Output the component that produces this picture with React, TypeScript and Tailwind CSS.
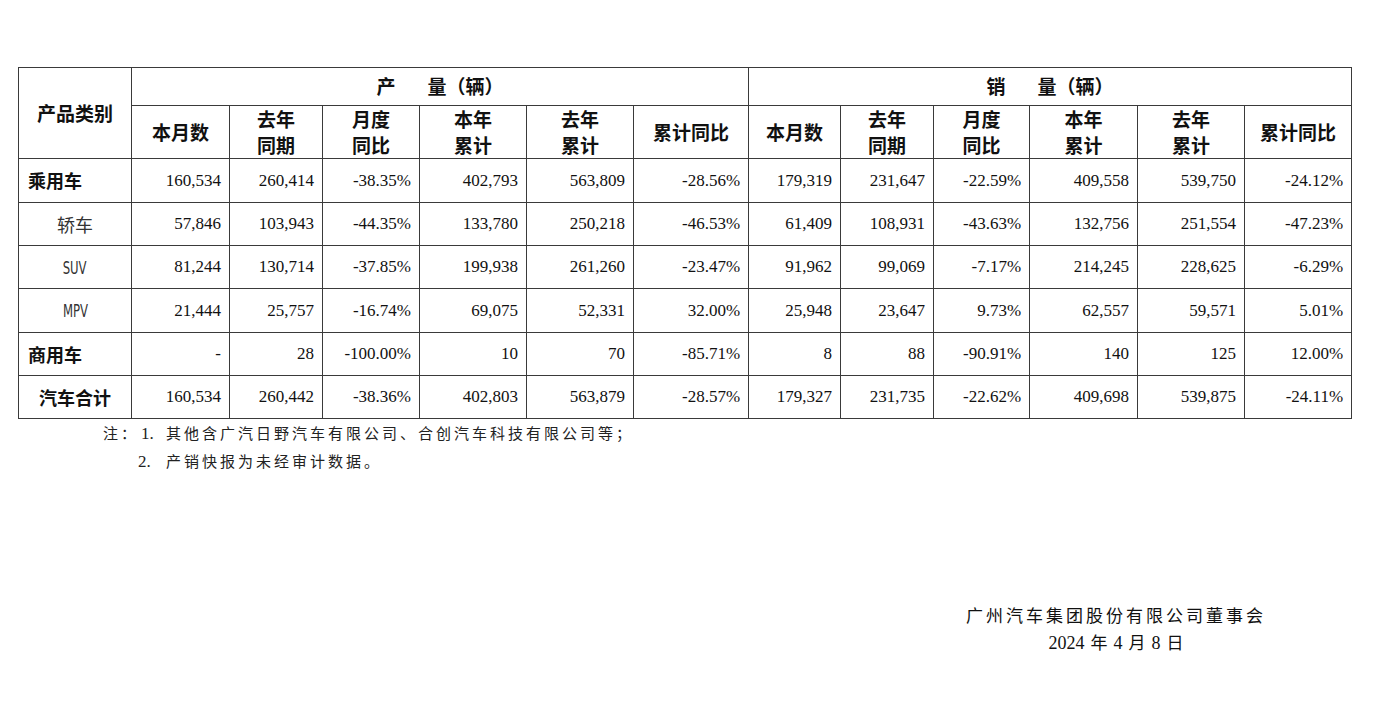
import React from "react";

const cjk = '"Noto Sans CJK SC", sans-serif';
const serif = '"Liberation Serif", "Noto Sans CJK SC", serif';

const widths = [113, 98, 93, 97, 107, 107, 115, 92, 93, 96, 108, 107, 107];

type Row = {
  name: string;
  kind: "main" | "sub" | "total";
  values: string[];
  height: string;
};

const rows: Row[] = [
  {
    name: "乘用车",
    kind: "main",
    height: "h-[44px]",
    values: ["160,534", "260,414", "-38.35%", "402,793", "563,809", "-28.56%", "179,319", "231,647", "-22.59%", "409,558", "539,750", "-24.12%"],
  },
  {
    name: "轿车",
    kind: "sub",
    height: "h-[43px]",
    values: ["57,846", "103,943", "-44.35%", "133,780", "250,218", "-46.53%", "61,409", "108,931", "-43.63%", "132,756", "251,554", "-47.23%"],
  },
  {
    name: "SUV",
    kind: "sub",
    height: "h-[43px]",
    values: ["81,244", "130,714", "-37.85%", "199,938", "261,260", "-23.47%", "91,962", "99,069", "-7.17%", "214,245", "228,625", "-6.29%"],
  },
  {
    name: "MPV",
    kind: "sub",
    height: "h-[44px]",
    values: ["21,444", "25,757", "-16.74%", "69,075", "52,331", "32.00%", "25,948", "23,647", "9.73%", "62,557", "59,571", "5.01%"],
  },
  {
    name: "商用车",
    kind: "main",
    height: "h-[43px]",
    values: ["-", "28", "-100.00%", "10", "70", "-85.71%", "8", "88", "-90.91%", "140", "125", "12.00%"],
  },
  {
    name: "汽车合计",
    kind: "total",
    height: "h-[43px]",
    values: ["160,534", "260,442", "-38.36%", "402,803", "563,879", "-28.57%", "179,327", "231,735", "-22.62%", "409,698", "539,875", "-24.11%"],
  },
];

const subHeads = [
  ["本月数"],
  ["去年", "同期"],
  ["月度", "同比"],
  ["本年", "累计"],
  ["去年", "累计"],
  ["累计同比"],
];

function HeadCell({ lines }: { lines: string[] }) {
  return (
    <th className="border border-[#3a3a3a] text-center align-middle font-bold text-[19px] leading-[26px] text-[#111]">
      {lines.map((l) => (
        <div key={l}>{l}</div>
      ))}
    </th>
  );
}

function NameCell({ row }: { row: Row }) {
  if (row.name === "SUV" || row.name === "MPV") {
    return (
      <td
        className="border border-[#3a3a3a] text-center text-[18px] text-[#333]"
        style={{ fontFamily: '"DejaVu Sans Condensed", "Liberation Sans Narrow", "Liberation Sans", sans-serif' }}
      >
        <span className="inline-block scale-x-[0.72]">{row.name}</span>
      </td>
    );
  }
  if (row.kind === "sub") {
    return <td className="border border-[#3a3a3a] text-center text-[18px] text-[#333]">{row.name}</td>;
  }
  if (row.kind === "total") {
    return <td className="border border-[#3a3a3a] text-center text-[18px] font-bold text-[#111]">{row.name}</td>;
  }
  return <td className="border border-[#3a3a3a] pl-[9px] text-left text-[18px] font-bold text-[#111]">{row.name}</td>;
}

export default function App() {
  return (
    <div className="min-h-[706px] w-[1375px] bg-white text-[#111]" style={{ fontFamily: cjk }}>
      <div className="pl-[18px] pt-[67px]">
        <table className="w-[1333px] table-fixed border-collapse border border-[#333]">
          <colgroup>
            {widths.map((w, i) => (
              <col key={i} style={{ width: w }} />
            ))}
          </colgroup>
          <thead>
            <tr className="h-[38px]">
              <th rowSpan={2} className="border border-[#3a3a3a] text-center align-middle text-[19px] font-bold">
                产品类别
              </th>
              <th colSpan={6} className="border border-[#3a3a3a] text-center text-[19px] font-bold">
                产<span className="inline-block w-[32px]" />量（辆）
              </th>
              <th colSpan={6} className="border border-[#3a3a3a] text-center text-[19px] font-bold">
                销<span className="inline-block w-[32px]" />量（辆）
              </th>
            </tr>
            <tr className="h-[53px]">
              {[...subHeads, ...subHeads].map((h, i) => (
                <HeadCell key={i} lines={h} />
              ))}
            </tr>
          </thead>
          <tbody>
            {rows.map((r) => (
              <tr key={r.name} className={r.height}>
                <NameCell row={r} />
                {r.values.map((v, i) => (
                  <td
                    key={i}
                    className="border border-[#3a3a3a] pr-[8px] text-right text-[17px] text-[#111]"
                    style={{ fontFamily: serif }}
                  >
                    {v}
                  </td>
                ))}
              </tr>
            ))}
          </tbody>
        </table>
      </div>

      <div className="pl-[103px] text-[15px] leading-[27px] text-[#222]">
        <div className="flex items-baseline">
          <span className="w-[38px] tracking-[3px]">注：</span>
          <span className="w-[25px] text-[17px]" style={{ fontFamily: serif }}>1.</span>
          <span className="tracking-[3px]">其他含广汽日野汽车有限公司、合创汽车科技有限公司等；</span>
        </div>
        <div className="flex items-baseline">
          <span className="w-[35px]" />
          <span className="w-[28px] text-[17px]" style={{ fontFamily: serif }}>2.</span>
          <span className="tracking-[3px]">产销快报为未经审计数据。</span>
        </div>
      </div>

      <div className="ml-[966px] mt-[126px] flex w-[300px] flex-col items-center text-[17px] leading-[27px] text-[#111]">
        <div className="tracking-[3px]">广州汽车集团股份有限公司董事会</div>
        <div className="flex items-baseline">
          <span style={{ fontFamily: serif }} className="text-[18px]">2024</span>
          <span className="mx-[6px]">年</span>
          <span style={{ fontFamily: serif }} className="text-[18px]">4</span>
          <span className="mx-[6px]">月</span>
          <span style={{ fontFamily: serif }} className="text-[18px]">8</span>
          <span className="ml-[6px]">日</span>
        </div>
      </div>
    </div>
  );
}
